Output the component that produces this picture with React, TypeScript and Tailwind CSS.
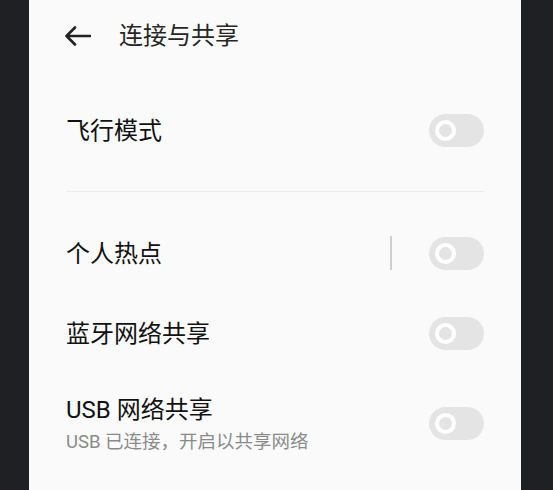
const font = { fontFamily: 'Roboto, "Noto Sans CJK SC", sans-serif' }

function Toggle() {
  return (
    <div className="flex h-[33px] w-[55px] shrink-0 items-center rounded-full bg-[#e4e4e4] pl-[6px]">
      <span className="h-[21px] w-[21px] rounded-full border-[4px] border-white" />
    </div>
  )
}

function Row({ title, sub, bar }: { title: string; sub?: string; bar?: boolean }) {
  return (
    <div className={`flex items-center ${sub ? 'h-[100px]' : 'h-[80px]'}`}>
      <div className={`flex-1 ${sub ? 'pt-[6px]' : 'pt-[2px]'}`}>
        <div className="text-[24px] leading-[32px] text-[#111]">{title}</div>
        {sub && <div className="text-[18.5px] leading-[32px] text-[#8a8a8a]">{sub}</div>}
      </div>
      {bar && <div className="mr-[37px] h-[34px] w-[2px] bg-[#cfcfcf]" />}
      <Toggle />
    </div>
  )
}

export default function App() {
  return (
    <div className="flex h-[490px] w-[553px] bg-[#1f2023]" style={font}>
      <div className="ml-[29px] h-full w-[492px] bg-[#fafafa]">
        <div className="flex h-[72px] items-center pl-[35px]">
          <svg width="27" height="20" viewBox="0 0 27 20" fill="none" stroke="#222" strokeWidth="2.6" strokeLinecap="round" strokeLinejoin="round">
            <path d="M26 10H2.5M11 1.5L2.5 10L11 18.5" />
          </svg>
          <span className="ml-[28px] text-[24px] leading-[32px] text-[#262626]">连接与共享</span>
        </div>
        <div className="px-[37px]">
          <div className="mt-[18px]">
            <Row title="飞行模式" />
          </div>
          <div className="mt-[21px] h-px bg-[#ebebeb]" />
          <div className="mt-[21px]">
            <Row title="个人热点" bar />
            <Row title="蓝牙网络共享" />
            <Row title="USB 网络共享" sub="USB 已连接，开启以共享网络" />
          </div>
        </div>
      </div>
    </div>
  )
}
